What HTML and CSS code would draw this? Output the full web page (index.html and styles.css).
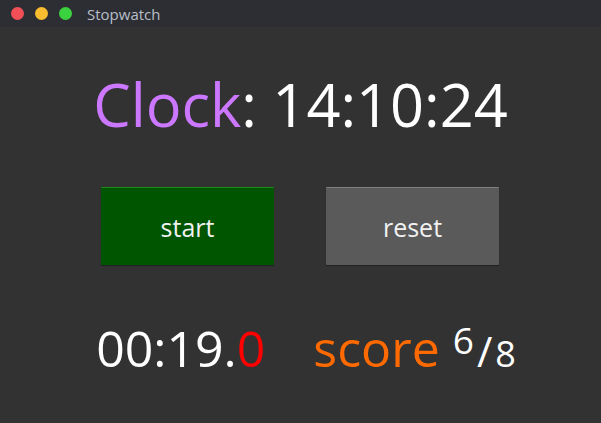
FILE: index.html
```html
<!DOCTYPE html>
<html>
<head>
<meta charset="utf-8">
<link rel="stylesheet" href="styles.css">
</head>
<body>
<div class="window">
  <div class="titlebar">
    <span class="dot red"></span>
    <span class="dot yellow"></span>
    <span class="dot green"></span>
    <span class="title">Stopwatch</span>
  </div>
  <div class="content">
    <div class="clock"><span class="clock-label">Clock</span>: 14:10:24</div>
    <div class="buttons">
      <div class="btn btn-start">start</div>
      <div class="btn btn-reset">reset</div>
    </div>
    <div class="bottom">
      <span class="elapsed">00:19.<span class="tenth">0</span></span>
      <span class="score"><span class="score-label">score</span> <span class="num">6</span><span class="slash">/</span><span class="den">8</span></span>
    </div>
  </div>
</div>
</body>
</html>
```
FILE: styles.css
```css
html, body {
  margin: 0;
  padding: 0;
  background: #323232;
}
.window {
  width: 601px;
  height: 423px;
  background: #323232;
  font-family: "Open Sans", "Noto Sans", sans-serif;
  color: #ffffff;
  overflow: hidden;
}
.titlebar {
  height: 27px;
  background: #2d2e33;
  display: flex;
  align-items: center;
  padding-left: 11px;
  gap: 11px;
}
.dot {
  width: 13px;
  height: 13px;
  border-radius: 50%;
  display: block;
}
.red { background: #f25056; }
.yellow { background: #fabd2f; }
.green { background: #3ad33f; }
.title {
  font-size: 15px;
  color: #b8bfca;
  margin-left: 4px;
}
.content {
  display: flex;
  flex-direction: column;
  align-items: center;
}
.clock {
  font-size: 59.5px;
  line-height: 80px;
  margin-top: 37px;
}
.clock-label { color: #cc77ff; }
.buttons {
  display: flex;
  gap: 52px;
  margin-top: 43px;
  margin-left: -1px;
}
.btn {
  width: 173px;
  height: 78px;
  box-sizing: border-box;
  display: flex;
  align-items: center;
  justify-content: center;
  font-size: 25px;
  color: #f2f2f2;
  border-radius: 1px;
  box-shadow: 0 1px 1px rgba(0,0,0,0.35);
}
.btn-start {
  background: #005500;
  border-top: 1px solid #1f8a1f;
}
.btn-reset {
  background: #5a5a5a;
  border-top: 1px solid #808080;
}
.bottom {
  display: flex;
  align-items: baseline;
  gap: 48px;
  margin-top: 48px;
  font-size: 50px;
  line-height: 70px;
  margin-left: 11px;
}
.tenth { color: #ff0000; }
.score-label { color: #ff6a00; }
.num {
  font-size: 37px;
  vertical-align: 13px;
  line-height: 1;
}
.slash {
  font-size: 42px;
  line-height: 1;
  margin: 0 3px 0 3px;
}
.den {
  font-size: 36px;
  line-height: 1;
}
```
